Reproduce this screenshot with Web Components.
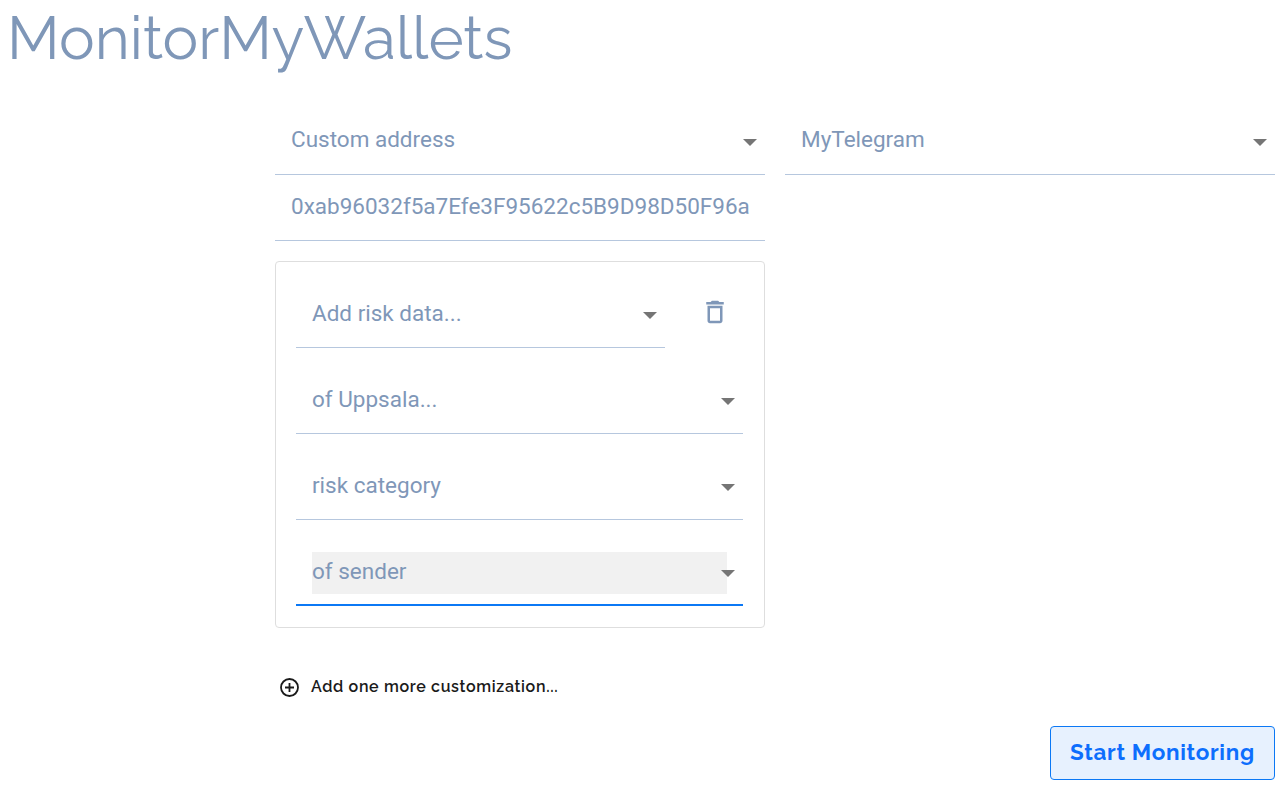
<!DOCTYPE html>
<html lang="en"><head><meta charset="utf-8"><title>MonitorMyWallets</title>
<style>
html,body{margin:0;padding:0;background:#fff}
body{width:1287px;height:788px;overflow:hidden;font-family:Roboto,sans-serif}
</style></head><body>
<app-page>
  <span slot="title">MonitorMyWallets</span>
  <x-select slot="left" arrow style="--lh:36px">Custom address</x-select>
  <x-select slot="left">0xab96032f5a7Efe3F95622c5B9D98D50F96a</x-select>
  <x-card slot="left">
    <div style="display:flex;gap:0">
      <x-select arrow style="width:369px">Add risk data...</x-select>
      <x-trash></x-trash>
    </div>
    <x-select arrow>of Uppsala...</x-select>
    <x-select arrow>risk category</x-select>
    <x-select arrow focused>of sender</x-select>
  </x-card>
  <x-select slot="right" arrow style="--lh:36px">MyTelegram</x-select>
  <x-add slot="add">Add one more customization...</x-add>
  <x-button slot="button">Start Monitoring</x-button>
</app-page>
<script>
function def(name, html){
  customElements.define(name, class extends HTMLElement{
    constructor(){super();this.attachShadow({mode:'open'}).innerHTML=html;}
  });
}
def('app-page',`<style>
:host{display:block;height:788px;box-sizing:border-box;padding-right:12px}
h1{margin:0;padding:0 0 0 7px;height:109px;box-sizing:border-box;font:400 60px/76px Raleway,Lato,sans-serif;color:#7f97b8}
main{margin-left:275px;width:1000px}
.cols{display:grid;grid-template-columns:490px 490px;gap:20px}
.left{display:flex;flex-direction:column}
.add{margin-top:47px}
.btn{display:flex;justify-content:flex-end;margin-top:27px}
</style>
<h1><slot name="title"></slot></h1>
<main>
<div class="cols"><div class="left"><slot name="left"></slot></div><div><slot name="right"></slot></div></div>
<div class="add"><slot name="add"></slot></div>
<div class="btn"><slot name="button"></slot></div>
</main>`);
customElements.define('x-select', class extends HTMLElement{
  constructor(){super();
    const focused=this.hasAttribute('focused'), arrow=this.hasAttribute('arrow');
    this.attachShadow({mode:'open'}).innerHTML=`<style>
:host{display:block;position:relative;box-sizing:border-box;height:66px;padding:12px 16px ${focused?10:11}px;border-bottom:${focused?'2px solid #0b78f5':'1px solid #b6c7de'}}
.v{display:block;height:42px;font:400 22.5px/var(--lh,38px) Roboto,sans-serif;color:#7f97b8;white-space:nowrap;background:${focused?'#f1f1f1':'transparent'}}
svg{position:absolute;right:8px;top:30px;width:14px;height:7px;display:${arrow?'block':'none'}}
</style><span class="v"><slot></slot></span>
<svg viewBox="0 0 14 7" aria-hidden="true"><path d="M0 0h14L7 7z" fill="#757575"/></svg>`;
  }
});
def('x-card',`<style>
:host{display:flex;flex-direction:column;gap:20px;box-sizing:border-box;margin-top:20px;height:367px;padding:20px 21px 21px 20px;border:1px solid #dedede;border-radius:4px}
</style><slot></slot>`);
def('x-trash',`<style>
:host{display:block;width:30px;height:30px;margin:15px 0 0 35px}
svg{display:block;width:30px;height:30px}
</style><svg viewBox="0 0 24 24" aria-hidden="true"><path fill="#7f97b8" d="M6 19c0 1.1.9 2 2 2h8c1.1 0 2-.9 2-2V7H6v12zM8 9h8v10H8V9zm7.5-5l-1-1h-5l-1 1H5v2h14V4h-3.5z"/></svg>`);
def('x-add',`<style>
:host{display:flex;align-items:center;height:24px;gap:12px;padding-left:5px;font:600 16px/24px Raleway,Inter,sans-serif;letter-spacing:.67px;color:#1a1a1a}
svg{width:19px;height:19px;flex:none}
</style><svg viewBox="0 0 19 19" aria-hidden="true"><circle cx="9.5" cy="9.5" r="8.5" fill="none" stroke="#1a1a1a" stroke-width="1.8"/><path d="M9.5 5v9M5 9.5h9" stroke="#1a1a1a" stroke-width="1.8"/></svg><span><slot></slot></span>`);
def('x-button',`<style>
:host{display:flex;align-items:center;justify-content:center;box-sizing:border-box;width:225px;height:54px;padding-bottom:2px;background:#e7f1fe;border:1px solid #0b78f5;border-radius:4px;font:700 22.4px/28px Raleway,Inter,sans-serif;letter-spacing:.7px;color:#0d6efd}
</style><slot></slot>`);
</script>
</body></html>
